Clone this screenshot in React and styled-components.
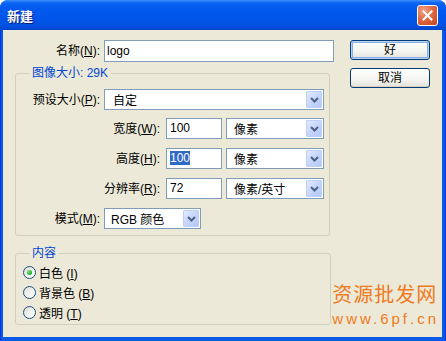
import React from "react";
import styled, { createGlobalStyle } from "styled-components";

const Global = createGlobalStyle`
  html, body { margin: 0; padding: 0; background: #ffffff; }
  body { font-family: "Liberation Sans", "Noto Sans CJK SC", sans-serif; font-size: 12px; color: #000; }
`;

const Window = styled.div`
  position: relative;
  width: 446px;
  height: 341px;
  display: flex;
  flex-direction: column;
  background: linear-gradient(to right, #0831D9 0px, #0A5AE8 2px, #0A5AE8 calc(100% - 2px), #0831D9 100%);
  border-radius: 8px 8px 0 0;
  overflow: hidden;
`;

const TitleBar = styled.div`
  height: 30px;
  flex: none;
  display: flex;
  align-items: center;
  justify-content: space-between;
  padding: 0 8px 0 7px;
  box-sizing: border-box;
  background: linear-gradient(to bottom, #3C8EFC 0%, #0A63F2 10%, #0058EE 35%, #0055E8 65%, #0050E0 88%, #0043C8 100%);
`;

const Title = styled.div`
  color: #fff;
  font-family: "Noto Sans CJK SC", sans-serif;
  font-weight: 700;
  font-size: 13px;
  line-height: 16px;
  text-shadow: 1px 1px 0 #0A1E7A;
  padding-top: 1px;
`;

const CloseBtn = styled.div`
  width: 21px;
  height: 21px;
  box-sizing: border-box;
  border: 1px solid #ffffff;
  border-radius: 3px;
  background: radial-gradient(circle at 30% 25%, #F0A28A 0%, #E06A45 45%, #C4401C 100%);
  display: flex;
  align-items: center;
  justify-content: center;
  margin-top: 1px;
`;

const Client = styled.div`
  flex: 1;
  margin: 0 4px 4px 3px;
  background: #ECE9D8;
  display: flex;
  align-items: flex-start;
`;

const LeftCol = styled.div`
  width: 331px;
  display: flex;
  flex-direction: column;
`;

const RightCol = styled.div`
  margin-left: 16px;
  padding-top: 10px;
  display: flex;
  flex-direction: column;
  gap: 8px;
`;

const Row = styled.div`
  display: flex;
  align-items: center;
  height: ${(p) => p.$h || 21}px;
  margin-top: ${(p) => p.$mt || 0}px;
`;

const Label = styled.div`
  width: ${(p) => p.$w}px;
  margin-right: ${(p) => p.$gap || 4}px;
  text-align: right;
  white-space: nowrap;
  line-height: 14px;
`;

const U = styled.span`
  text-decoration: underline;
  text-underline-offset: 1px;
`;

const Field = styled.div`
  width: ${(p) => p.$w}px;
  height: 100%;
  box-sizing: border-box;
  border: 1px solid #7F9DB9;
  background: #fff;
  padding: ${(p) => (p.$tall ? 3 : 2)}px 0 0 ${(p) => p.$pl || 2}px;
  line-height: 14px;
  white-space: nowrap;
`;

const Sel = styled.span`
  background: #316AC5;
  color: #fff;
`;

const Select = styled.div`
  width: ${(p) => p.$w}px;
  height: 100%;
  box-sizing: border-box;
  border: 1px solid #7F9DB9;
  background: #fff;
  display: flex;
  align-items: stretch;
  margin-left: ${(p) => p.$ml || 0}px;
`;

const SelectValue = styled.div`
  flex: 1;
  padding-left: ${(p) => p.$pl || 7}px;
  display: flex;
  align-items: center;
  white-space: nowrap;
`;

const ArrowBtn = styled.div`
  width: 16px;
  margin: 1px;
  box-sizing: border-box;
  border: 1px solid #BDCFF8;
  border-radius: 1px;
  background: linear-gradient(135deg, #E2EAFE 0%, #C6D6FB 50%, #B3C8F6 100%);
  display: flex;
  align-items: center;
  justify-content: center;
`;

const Group = styled.fieldset`
  margin: ${(p) => p.$mt}px 0 0 12px;
  padding: ${(p) => p.$pt}px 0 ${(p) => p.$pb}px 0;
  width: ${(p) => p.$w}px;
  box-sizing: border-box;
  border: 1px solid #D0D0BF;
  border-radius: 3px;
  min-inline-size: auto;
  display: flex;
  flex-direction: column;
`;

const Legend = styled.legend`
  margin-left: 13px;
  padding: 0 3px;
  color: #0046D5;
  font-size: 12px;
  line-height: 14px;
`;

const RadioRow = styled.div`
  height: 20px;
  display: flex;
  align-items: center;
  padding-left: 7px;
  gap: 3px;
`;

const RadioCircle = styled.span`
  width: 13px;
  height: 13px;
  box-sizing: border-box;
  border-radius: 50%;
  border: 1px solid #1C5180;
  background: linear-gradient(135deg, #DCDCD7 0%, #F2F2EF 55%, #FFFFFF 100%);
  display: flex;
  align-items: center;
  justify-content: center;
  &::after {
    content: "";
    display: ${(p) => (p.$on ? "block" : "none")};
    width: 5px;
    height: 5px;
    border-radius: 50%;
    background: radial-gradient(circle at 35% 35%, #7CE87C 0%, #2FB52F 55%, #168A16 100%);
  }
`;

const Button = styled.div`
  width: 80px;
  height: 20px;
  box-sizing: border-box;
  border: 1px solid #003C74;
  border-radius: 3px;
  background: linear-gradient(to bottom, #FFFFFF 0%, #F4F4F0 60%, #E3E2DA 100%);
  box-shadow: ${(p) => (p.$default ? "inset 0 0 0 1px #B9D0F7, inset 0 0 0 2px #89ADE4" : "inset 0 -1px 0 #D6D0C5")};
  display: flex;
  align-items: center;
  justify-content: center;
  font-size: 12px;
  line-height: 14px;
`;

const Watermark = styled.div`
  position: absolute;
  right: 7px;
  top: 283px;
  color: #F07A20;
  display: flex;
  flex-direction: column;
  align-items: flex-start;
  pointer-events: none;
`;

const WmCn = styled.div`
  font-family: "Noto Sans CJK SC", sans-serif;
  font-size: 20px;
  line-height: 22px;
  letter-spacing: 1px;
`;

const WmUrl = styled.div`
  margin-top: 5px;
  font-family: "Liberation Sans", sans-serif;
  font-size: 15px;
  line-height: 17px;
  letter-spacing: 3px;
`;

const Chevron = () => (
  <svg width="9" height="6" viewBox="0 0 9 6">
    <path d="M1 1 L4.5 4.5 L8 1" fill="none" stroke="#4D6185" strokeWidth="2" />
  </svg>
);

const Combo = ({ w, ml, pl, children }) => (
  <Select $w={w} $ml={ml}>
    <SelectValue $pl={pl}>{children}</SelectValue>
    <ArrowBtn>
      <Chevron />
    </ArrowBtn>
  </Select>
);

const Radio = ({ on, children }) => (
  <RadioRow>
    <RadioCircle $on={on} />
    <span>{children}</span>
  </RadioRow>
);

export default function App() {
  return (
    <>
      <Global />
      <Window>
        <TitleBar>
          <Title>新建</Title>
          <CloseBtn>
            <svg width="11" height="11" viewBox="0 0 11 11">
              <path d="M1.5 1.5 L9.5 9.5 M9.5 1.5 L1.5 9.5" stroke="#fff" strokeWidth="2" strokeLinecap="square" />
            </svg>
          </CloseBtn>
        </TitleBar>
        <Client>
          <LeftCol>
            <Row $h={22} $mt={10}>
              <Label $w={97}>
                名称(<U>N</U>):
              </Label>
              <Field $w={230} $tall>logo</Field>
            </Row>
            <Group $mt={4} $pt={9} $pb={6} $w={315}>
              <Legend>图像大小: 29K</Legend>
              <Row>
                <Label $w={84}>
                  预设大小(<U>P</U>):
                </Label>
                <Combo w={220} pl={8}>自定</Combo>
              </Row>
              <Row $mt={8}>
                <Label $w={144} $gap={6}>
                  宽度(<U>W</U>):
                </Label>
                <Field $w={56} $pl={3}>100</Field>
                <Combo w={98} ml={4}>像素</Combo>
              </Row>
              <Row $mt={9}>
                <Label $w={144} $gap={6}>
                  高度(<U>H</U>):
                </Label>
                <Field $w={56} $pl={3}>
                  <Sel>100</Sel>
                </Field>
                <Combo w={98} ml={4}>像素</Combo>
              </Row>
              <Row $mt={9}>
                <Label $w={144} $gap={6}>
                  分辨率(<U>R</U>):
                </Label>
                <Field $w={56} $pl={3}>72</Field>
                <Combo w={98} ml={4}>像素/英寸</Combo>
              </Row>
              <Row $mt={9}>
                <Label $w={84}>
                  模式(<U>M</U>):
                </Label>
                <Combo w={97} pl={6}>RGB 颜色</Combo>
              </Row>
            </Group>
            <Group $mt={10} $pt={2} $pb={2} $w={316}>
              <Legend>内容</Legend>
              <Radio on>
                白色 (<U>I</U>)
              </Radio>
              <Radio>
                背景色 (<U>B</U>)
              </Radio>
              <Radio>
                透明 (<U>T</U>)
              </Radio>
            </Group>
          </LeftCol>
          <RightCol>
            <Button $default>好</Button>
            <Button>取消</Button>
          </RightCol>
        </Client>
        <Watermark>
          <WmCn>资源批发网</WmCn>
          <WmUrl>www.6pf.cn</WmUrl>
        </Watermark>
      </Window>
    </>
  );
}
